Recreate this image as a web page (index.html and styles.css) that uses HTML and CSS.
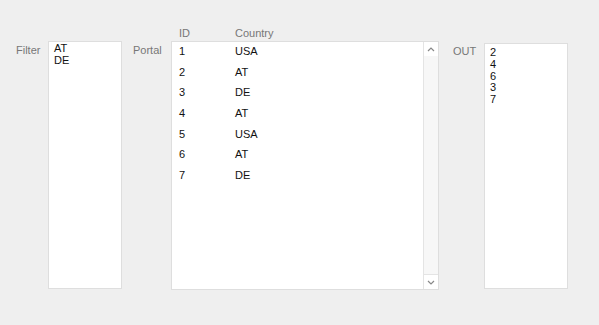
FILE: index.html
```html
<!DOCTYPE html>
<html lang="en">
<head>
  <meta charset="UTF-8" />
  <title>Portal Filter</title>
  <link rel="stylesheet" href="styles.css">
</head>
<body>

  <div class="panel">
    <div class="group">
      <label class="caption filter-caption">Filter</label>
      <div class="listbox filter-box">
        <div>AT</div>
        <div>DE</div>
      </div>
    </div>

    <div class="group">
      <label class="caption portal-caption">Portal</label>
      <div class="portal">
        <div class="head">
          <span class="col-id">ID</span>
          <span class="col-country">Country</span>
        </div>
        <div class="table">
          <div class="rows">
            <div class="row"><span class="col-id">1</span><span class="col-country">USA</span></div>
            <div class="row"><span class="col-id">2</span><span class="col-country">AT</span></div>
            <div class="row"><span class="col-id">3</span><span class="col-country">DE</span></div>
            <div class="row"><span class="col-id">4</span><span class="col-country">AT</span></div>
            <div class="row"><span class="col-id">5</span><span class="col-country">USA</span></div>
            <div class="row"><span class="col-id">6</span><span class="col-country">AT</span></div>
            <div class="row"><span class="col-id">7</span><span class="col-country">DE</span></div>
          </div>
          <div class="scrollbar">
            <div class="arrow">
              <svg width="8" height="5" viewBox="0 0 8 5"><path d="M1 4 L4 1 L7 4" fill="none" stroke="#888" stroke-width="1.2"/></svg>
            </div>
            <div class="track"></div>
            <div class="arrow down">
              <svg width="8" height="5" viewBox="0 0 8 5"><path d="M1 1 L4 4 L7 1" fill="none" stroke="#888" stroke-width="1.2"/></svg>
            </div>
          </div>
        </div>
      </div>
    </div>

    <div class="group">
      <label class="caption out-caption">OUT</label>
      <div class="listbox out-box">
        <div>2</div>
        <div>4</div>
        <div>6</div>
        <div>3</div>
        <div>7</div>
      </div>
    </div>
  </div>

</body>
</html>
```

FILE: styles.css
```css
body {
  margin: 0;
  background: #efefef;
  font-family: 'Liberation Sans', Arial, sans-serif;
  font-size: 11px;
  color: #111;
}
.panel {
  display: flex;
  align-items: flex-start;
  padding: 41px 0 0 16px;
}
.group {
  display: flex;
  align-items: flex-start;
}
.caption {
  color: #777;
  line-height: 14px;
  padding-top: 2px;
}
.filter-caption {
  width: 32px;
}
.portal-caption {
  width: 38px;
  margin-left: 11px;
}
.out-caption {
  width: 31px;
  margin-left: 14px;
  padding-top: 3px;
}
.listbox {
  background: white;
  border: 1px solid #dedede;
  box-sizing: border-box;
  padding: 1px 5px;
  line-height: 11.8px;
}
.filter-box {
  width: 74px;
  height: 248px;
}
.out-box {
  width: 84px;
  height: 246px;
  margin-top: 2px;
  padding-top: 3px;
}
.portal {
  margin-top: -16px;
}
.head {
  display: flex;
  height: 16px;
  line-height: 16px;
  color: #777;
  margin-left: 1px;
}
.col-id {
  width: 56px;
  padding-left: 7px;
}
.table {
  display: flex;
  width: 268px;
  height: 249px;
  background: white;
  border: 1px solid #dedede;
  box-sizing: border-box;
}
.rows {
  flex: 1;
}
.row {
  display: flex;
  height: 20.7px;
  line-height: 19px;
}
.scrollbar {
  width: 14px;
  display: flex;
  flex-direction: column;
  border-left: 1px solid #e4e4e4;
}
.arrow {
  height: 14px;
  display: flex;
  align-items: center;
  justify-content: center;
  background: white;
}
.arrow.down {
  border-top: 1px solid #e4e4e4;
}
.track {
  flex: 1;
  background: #f7f7f7;
}
```
